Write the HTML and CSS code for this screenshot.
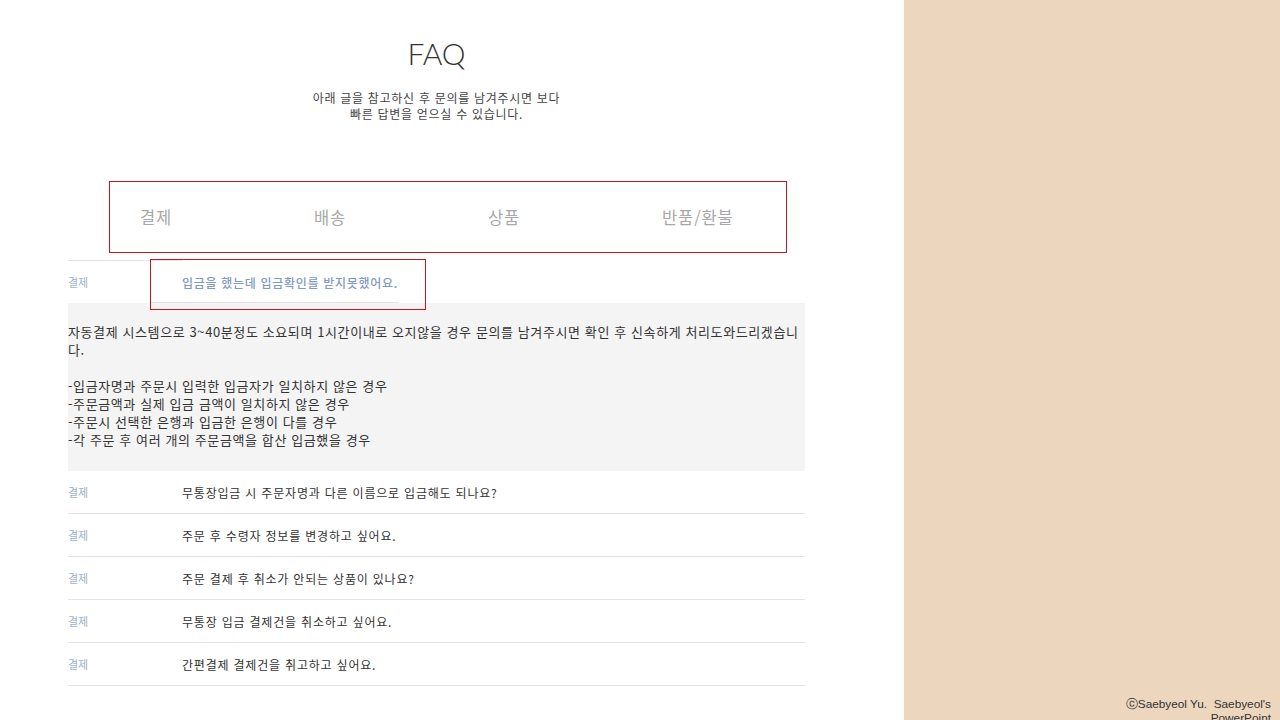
FILE: index.html
```html
<!DOCTYPE html>
<html lang="ko">
<head>
<meta charset="utf-8">
<title>FAQ</title>
<link rel="stylesheet" href="styles.css">
</head>
<body>
<div class="page">
  <main class="main">
    <div class="content">
      <h1 class="title">FAQ</h1>
      <p class="subtitle">아래 글을 참고하신 후 문의를 남겨주시면 보다<br>빠른 답변을 얻으실 수 있습니다.</p>
      <nav class="tabs">
        <span class="tab">결제</span>
        <span class="tab">배송</span>
        <span class="tab">상품</span>
        <span class="tab">반품/환불</span>
      </nav>
      <div class="list">
        <div class="row row-open">
          <span class="cat cat-first">결제</span>
          <span class="q q-open">입금을 했는데 입금확인를 받지못했어요.</span>
          <span class="highlight"></span>
        </div>
        <div class="answer">
          <p>자동결제 시스템으로 3~40분정도 소요되며 1시간이내로 오지않을 경우 문의를 남겨주시면 확인 후 신속하게 처리도와드리겠습니다.</p>
          <p class="gap">-입금자명과 주문시 입력한 입금자가 일치하지 않은 경우<br>-주문금액과 실제 입금 금액이 일치하지 않은 경우<br>-주문시 선택한 은행과 입금한 은행이 다를 경우<br>-각 주문 후 여러 개의 주문금액을 합산 입금했을 경우</p>
        </div>
        <div class="row"><span class="cat">결제</span><span class="q">무통장입금 시 주문자명과 다른 이름으로 입금해도 되나요?</span></div>
        <div class="row"><span class="cat">결제</span><span class="q">주문 후 수령자 정보를 변경하고 싶어요.</span></div>
        <div class="row"><span class="cat">결제</span><span class="q">주문 결제 후 취소가 안되는 상품이 있나요?</span></div>
        <div class="row"><span class="cat">결제</span><span class="q">무통장 입금 결제건을 취소하고 싶어요.</span></div>
        <div class="row"><span class="cat">결제</span><span class="q">간편결제 결제건을 취고하고 싶어요.</span></div>
      </div>
    </div>
  </main>
  <aside class="side">
    <p class="credit">ⓒSaebyeol Yu.&nbsp; Saebyeol's PowerPoint</p>
  </aside>
</div>
</body>
</html>
```

FILE: styles.css
```css
* { box-sizing: border-box; }
html, body { margin: 0; padding: 0; }
body {
  font-family: "Noto Sans CJK KR", "Noto Sans", sans-serif;
  color: #333;
  background: #fff;
}
.page {
  display: flex;
  width: 1280px;
  height: 720px;
  overflow: hidden;
}
.main {
  width: 904px;
  flex: none;
  background: #fff;
}
.content {
  width: 737px;
  margin-left: 68px;
  padding-top: 33px;
}
.title {
  margin: 0;
  font-family: "Lato", "Noto Sans", sans-serif;
  font-weight: 300;
  font-size: 30px;
  line-height: 40px;
  color: #333;
  text-align: center;
}
.subtitle {
  margin: 17px 0 0;
  font-size: 12px;
  letter-spacing: 0.7px;
  line-height: 16px;
  color: #444;
  text-align: center;
}
.tabs {
  margin: 59px 0 0 41px;
  width: 678px;
  height: 72px;
  border: 1px solid #c4161c;
  display: grid;
  grid-template-columns: repeat(4, 174px);
  align-items: center;
  padding-left: 30px;
}
.tab {
  font-size: 16.5px;
  letter-spacing: 0.9px;
  color: #a8a8a8;
}
.list {
  margin-top: 7px;
}
.row {
  display: grid;
  grid-template-columns: 114px 1fr;
  align-items: center;
  height: 43px;
  border-bottom: 1px solid #e4e4e4;
  position: relative;
}
.row-open {
  border-bottom: none;
  height: 43px;
  padding-top: 1px;
}
.cat {
  font-size: 11px;
  color: #9fb1c9;
}
.cat-first {
  align-self: stretch;
  display: flex;
  align-items: center;
  border-top: 1px solid #e4e4e4;
  margin-top: -1px;
}
.q {
  font-size: 12px;
  letter-spacing: 0.8px;
  color: #333;
}
.q-open {
  color: #7f9ac4;
  font-weight: 500;
  letter-spacing: 0.7px;
}
.highlight {
  position: absolute;
  left: 82px;
  top: -1px;
  width: 276px;
  height: 51px;
  border: 1px solid #c4161c;
  pointer-events: none;
}
.highlight::after {
  content: "";
  position: absolute;
  left: 0;
  right: 26px;
  bottom: 6px;
  border-bottom: 1px solid #e4e4e4;
}
.answer {
  background: #f4f4f4;
  padding: 20px 6px 22px 0;
  font-size: 13px;
  letter-spacing: 0.6px;
  line-height: 18px;
  color: #333;
}
.answer p {
  margin: 0;
}
.answer .gap {
  margin-top: 18px;
}
.side {
  flex: 1;
  background: #edd6be;
  display: flex;
  flex-direction: column;
  justify-content: flex-end;
  align-items: flex-end;
}
.credit {
  margin: 0 9px -5px 0;
  width: 152px;
  font-family: "Liberation Sans", Arial, sans-serif;
  font-size: 11.8px;
  line-height: 14px;
  text-align: right;
  color: #333;
}
```
